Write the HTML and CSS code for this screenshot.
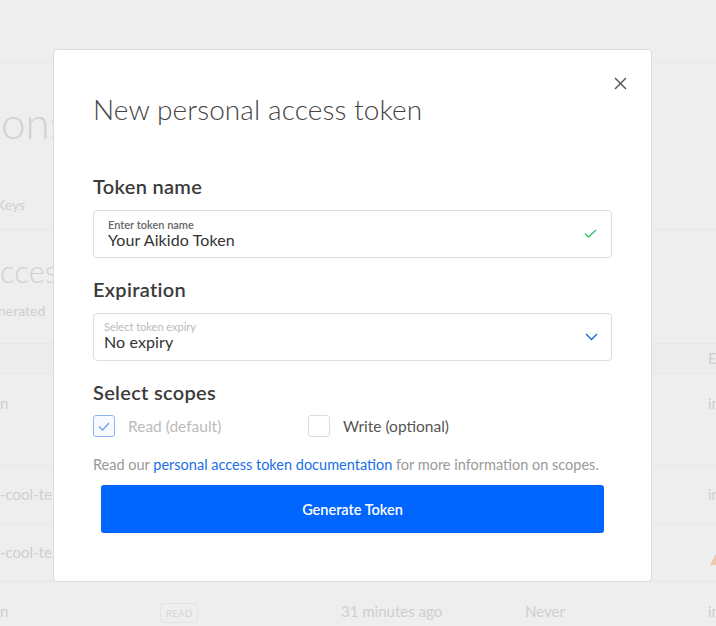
FILE: index.html
```html
<!DOCTYPE html>
<html lang="en">

<head>
    <meta charset="UTF-8">
    <meta name="viewport" content="width=device-width, initial-scale=1.0">
    <title>New personal access token</title>
    <link rel="stylesheet" href="styles.css">
</head>

<body>
    <!-- page behind the dialog -->
    <div class="page">
        <div class="topbar"></div>
        <div class="head">
            <h1 class="page_title">ons</h1>
        </div>
        <div class="tabs">
            <span class="tab">Keys</span>
        </div>
        <div class="section">
            <h2 class="section_title">ccess</h2>
            <p class="section_sub">nerated</p>
        </div>
        <div class="table">
            <div class="row row_head">
                <span></span><span></span><span></span><span></span><span>E</span>
            </div>
            <div class="row row_tall">
                <span>n</span><span></span><span></span><span></span><span>in</span>
            </div>
            <div class="row">
                <span>-cool-te</span><span></span><span></span><span></span><span>in</span>
            </div>
            <div class="row">
                <span>-cool-te</span><span></span><span></span><span></span>
                <span><svg class="warn" width="12" height="11" viewBox="0 0 12 11"><polygon points="6,0 12,11 0,11" fill="#f1c7a6"/></svg></span>
            </div>
            <div class="row row_last">
                <span>n</span><span><span class="badge">READ</span></span><span>31 minutes ago</span><span>Never</span><span>in</span>
            </div>
        </div>
    </div>

    <!-- ------------------------------------------------------------------------------------ -->

    <div class="modal">
        <button class="close" type="button">
            <svg width="13" height="13" viewBox="0 0 13 13">
                <line x1="1" y1="1" x2="12" y2="12" stroke="#555" stroke-width="1.4"/>
                <line x1="12" y1="1" x2="1" y2="12" stroke="#555" stroke-width="1.4"/>
            </svg>
        </button>
        <h1 class="modal_title">New personal access token</h1>

        <h3 class="label label_first">Token name</h3>
        <div class="field field_name">
            <div class="field_text">
                <div class="field_label">Enter token name</div>
                <div class="field_value">Your Aikido Token</div>
            </div>
            <svg class="check" width="13" height="9" viewBox="0 0 13 9">
                <polyline points="1,4.5 4.5,8 12,1" fill="none" stroke="#2bc56e" stroke-width="1.3"/>
            </svg>
        </div>

        <h3 class="label">Expiration</h3>
        <div class="field field_select">
            <div class="field_text">
                <div class="field_label field_label_light">Select token expiry</div>
                <div class="field_value">No expiry</div>
            </div>
            <svg class="chevron" width="13" height="8" viewBox="0 0 13 8">
                <polyline points="1,1 6.5,6.5 12,1" fill="none" stroke="#1d6fe6" stroke-width="1.5"/>
            </svg>
        </div>

        <h3 class="label">Select scopes</h3>
        <div class="scopes">
            <label class="scope">
                <span class="box box_on">
                    <svg width="12" height="9" viewBox="0 0 12 9">
                        <polyline points="1,4.5 4.5,8 11,1" fill="none" stroke="#6aa3f0" stroke-width="1.3"/>
                    </svg>
                </span>
                <span class="scope_text scope_text_off">Read (default)</span>
            </label>
            <label class="scope">
                <span class="box"></span>
                <span class="scope_text">Write (optional)</span>
            </label>
        </div>

        <p class="help">Read our <a href="#">personal access token documentation</a> for more information on scopes.</p>

        <button class="btn" type="button">Generate Token</button>
    </div>
</body>

</html>
```

FILE: styles.css
```css
body {
    margin: 0;
    background: #eeeeee;
    font-family: "Lato", "Liberation Sans", sans-serif;
    color: #cfcfcf;
    overflow: hidden;
}

/* background page */

.topbar {
    height: 62px;
    border-bottom: 1px solid #e7e7e7;
}

.head {
    height: 84px;
    padding-top: 33px;
}

.page_title {
    margin: 0;
    font-size: 44px;
    line-height: 52px;
    font-weight: 300;
    color: #d2d2d2;
    padding-left: 1px;
}

.tabs {
    height: 49px;
    line-height: 49px;
    border-bottom: 1px solid #e7e7e7;
    font-size: 14px;
}

.tab {
    margin-left: -4px;
}

.section {
    height: 90px;
    padding-top: 23px;
}

.section_title {
    margin: 0;
    font-size: 31px;
    line-height: 36px;
    font-weight: 300;
    color: #d2d2d2;
}

.section_sub {
    margin: 12px 0 0;
    font-size: 14px;
    line-height: 20px;
    margin-left: -2px;
}

.row {
    display: grid;
    grid-template-columns: 160px 181px 184px 183px 1fr;
    height: 57px;
    line-height: 56px;
    border-top: 1px solid #e7e7e7;
    font-size: 15px;
}

.row_head {
    height: 29px;
    line-height: 28px;
    background: #ececec;
}

.row_tall {
    height: 91px;
    line-height: 58px;
}

.row_last {
    height: 60px;
    line-height: 58px;
}

.badge {
    display: inline-block;
    border: 1px solid #e4e4e4;
    border-radius: 3px;
    padding: 0 5px;
    font-size: 10px;
    line-height: 18px;
    color: #d6d6d6;
    vertical-align: middle;
}

.warn {
    margin-top: 30px;
    margin-left: 2px;
}

/* dialog */

.modal {
    position: absolute;
    left: 53px;
    top: 49px;
    width: 599px;
    box-sizing: border-box;
    background: #ffffff;
    border: 1px solid #dcdcdc;
    border-radius: 4px;
    padding: 43px 39px 48px;
    color: #333;
}

.close {
    position: absolute;
    top: 27px;
    right: 24px;
    padding: 0;
    border: none;
    background: none;
    width: 13px;
    height: 13px;
    display: block;
}

.close svg {
    display: block;
}

.modal_title {
    margin: 0;
    font-size: 28px;
    line-height: 32px;
    font-weight: 300;
    color: #444;
    letter-spacing: 0.1px;
}

.label {
    margin: 19px 0 0;
    font-size: 20px;
    line-height: 24px;
    font-weight: 600;
    color: #3b3b3b;
    letter-spacing: 0.3px;
}

.label_first {
    margin-top: 49px;
}

.field {
    display: flex;
    align-items: center;
    margin-top: 12px;
    height: 48px;
    box-sizing: border-box;
    border: 1px solid #dddddd;
    border-radius: 4px;
    padding: 7px 14px 8px;
}

.field_select {
    padding: 6px 13px 9px 10px;
}

.field_text {
    flex: 1;
}

.field_label {
    font-size: 11px;
    line-height: 13px;
    font-weight: 600;
    color: #666;
}

.field_label_light {
    font-weight: 400;
    color: #b9b9b9;
}

.field_value {
    font-size: 16px;
    line-height: 18px;
    color: #333;
    letter-spacing: 0.1px;
}

.chevron {
    margin-top: 3px;
}

.scopes {
    display: grid;
    grid-template-columns: 215px auto;
    margin-top: 11px;
}

.scope {
    display: flex;
    align-items: center;
    gap: 13px;
}

.box {
    width: 22px;
    height: 22px;
    box-sizing: border-box;
    border: 1px solid #dcdcdc;
    border-radius: 3px;
    display: flex;
    align-items: center;
    justify-content: center;
}

.box_on {
    border-color: #8cb6f2;
    background: #f7faff;
}

.scope_text {
    font-size: 15.5px;
    line-height: 22px;
    color: #555;
}

.scope_text_off {
    color: #bbb;
}

.help {
    margin: 19px 0 0;
    font-size: 14.5px;
    line-height: 18px;
    color: #999;
}

.help a {
    color: #1a6fe6;
    text-decoration: none;
}

.btn {
    display: block;
    width: calc(100% - 16px);
    height: 48px;
    margin: 11px 8px 0;
    border: none;
    border-radius: 3px;
    background: #0066ff;
    color: #ffffff;
    font-family: "Lato", "Liberation Sans", sans-serif;
    font-size: 14.5px;
    font-weight: 600;
}
```
